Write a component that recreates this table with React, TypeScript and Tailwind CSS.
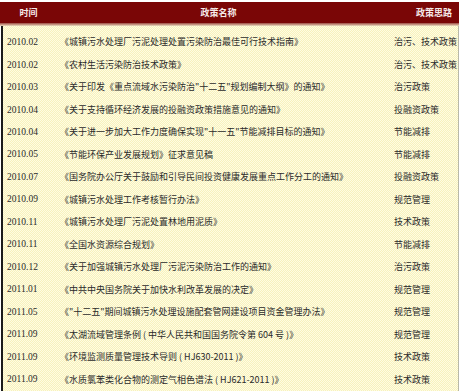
const rows: [string, string, string][] = [
  ["2010.02", "《城镇污水处理厂污泥处理处置污染防治最佳可行技术指南》", "治污、技术政策"],
  ["2010.02", "《农村生活污染防治技术政策》", "治污、技术政策"],
  ["2010.03", "《关于印发《重点流域水污染防治\"十二五\"规划编制大纲》的通知》", "治污政策"],
  ["2010.04", "《关于支持循环经济发展的投融资政策措施意见的通知》", "投融资政策"],
  ["2010.04", "《关于进一步加大工作力度确保实现\"十一五\"节能减排目标的通知》", "节能减排"],
  ["2010.05", "《节能环保产业发展规划》征求意见稿", "节能减排"],
  ["2010.07", "《国务院办公厅关于鼓励和引导民间投资健康发展重点工作分工的通知》", "投融资政策"],
  ["2010.09", "《城镇污水处理工作考核暂行办法》", "规范管理"],
  ["2010.11", "《城镇污水处理厂污泥处置林地用泥质》", "技术政策"],
  ["2010.11", "《全国水资源综合规划》", "节能减排"],
  ["2010.12", "《关于加强城镇污水处理厂污泥污染防治工作的通知》", "治污政策"],
  ["2011.01", "《中共中央国务院关于加快水利改革发展的决定》", "规范管理"],
  ["2011.05", "《\"十二五\"期间城镇污水处理设施配套管网建设项目资金管理办法》", "规范管理"],
  ["2011.09", "《太湖流域管理条例 ( 中华人民共和国国务院令第 604 号 )》", "规范管理"],
  ["2011.09", "《环境监测质量管理技术导则 ( HJ630-2011 )》", "技术政策"],
  ["2011.09", "《水质氯苯类化合物的测定气相色谱法 ( HJ621-2011 )》", "技术政策"],
];

const cjk = "font-['Noto_Sans_CJK_SC',sans-serif]";

export default function App() {
  return (
    <div className="h-[391px] w-[459px] overflow-hidden bg-white pt-[2px]">
      {/* header bar */}
      <div className={`flex h-[21px] items-center bg-[#7a0606] text-[9px] font-bold text-[#f6eaea] ${cjk}`}>
        <div className="w-[57px] text-center">时间</div>
        <div className="flex-1 pr-[12px] text-center">政策名称</div>
        <div className="w-[67px] pr-[7px] text-right">政策思路</div>
      </div>
      <div className="h-[3px] bg-gradient-to-b from-[#9c4a44] to-[#e9dfc2]" />

      {/* rows */}
      <div className="ml-px border-r border-l-2 border-r-[#b8b8a8] border-l-[#1a1a1a] bg-[image:repeating-conic-gradient(#fffde2_0%_25%,#f7f1bd_0%_50%)] bg-[length:2px_2px] pt-[5px]">
        {rows.map(([date, name, kind], i) => (
          <div key={i} className="flex h-[22.47px] items-center whitespace-nowrap text-[#2a2a2a]">
            <div className="w-[57px] pl-[4px] font-['Liberation_Serif',serif] text-[9.5px]">{date}</div>
            <div className={`flex-1 overflow-hidden text-[9px] ${cjk}`}>{name}</div>
            <div className={`w-[64px] text-[9px] ${cjk}`}>{kind}</div>
          </div>
        ))}
      </div>
    </div>
  );
}
